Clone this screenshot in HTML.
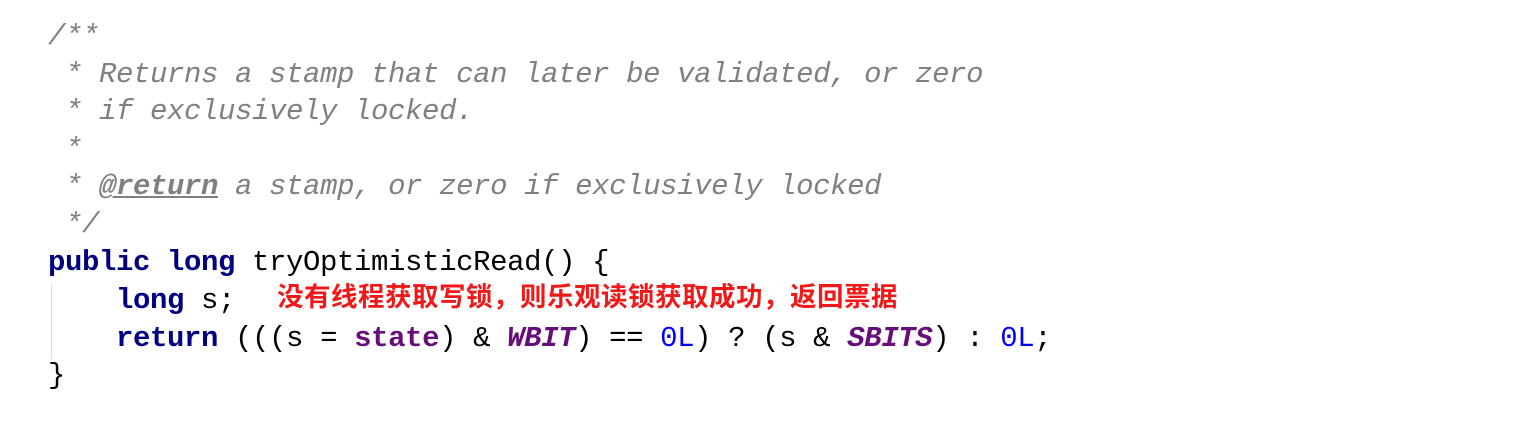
<!DOCTYPE html>
<html><head><meta charset="utf-8"><style>
html,body{margin:0;padding:0;background:#fff;width:1516px;height:424px;overflow:hidden}
pre{position:absolute;left:48px;top:18px;margin:0;font-family:"Liberation Mono","DejaVu Sans Mono",monospace;font-size:29px;line-height:37.6px;color:#000;letter-spacing:-0.4px}
.c{color:#808080;font-style:italic}
.t{font-weight:bold;text-decoration:underline;color:#808080}
.k{color:#000080;font-weight:bold}
.f{color:#660e7a;font-weight:bold}
.fi{color:#660e7a;font-weight:bold;font-style:italic}
.n{color:#0000ff}
.r{color:#f01818;font-weight:bold;font-family:"Liberation Sans","Noto Sans CJK SC",sans-serif;font-size:26.5px;letter-spacing:0.5px;position:relative;top:-2px;margin-left:-9px}
.g{position:absolute;left:51px;top:284px;width:1px;height:75px;background:#ddd}
</style></head><body>
<div class="g"></div>
<pre><span class="c">/**
 * Returns a stamp that can later be validated, or zero
 * if exclusively locked.
 *
 * <span class="t">@return</span> a stamp, or zero if exclusively locked
 */</span>
<span class="k">public long</span> tryOptimisticRead() {
    <span class="k">long</span> s;   <span class="r">没有线程获取写锁，则乐观读锁获取成功，返回票据</span>
    <span class="k">return</span> (((s = <span class="f">state</span>) &amp; <span class="fi">WBIT</span>) == <span class="n">0L</span>) ? (s &amp; <span class="fi">SBITS</span>) : <span class="n">0L</span>;
}</pre>
</body></html>
